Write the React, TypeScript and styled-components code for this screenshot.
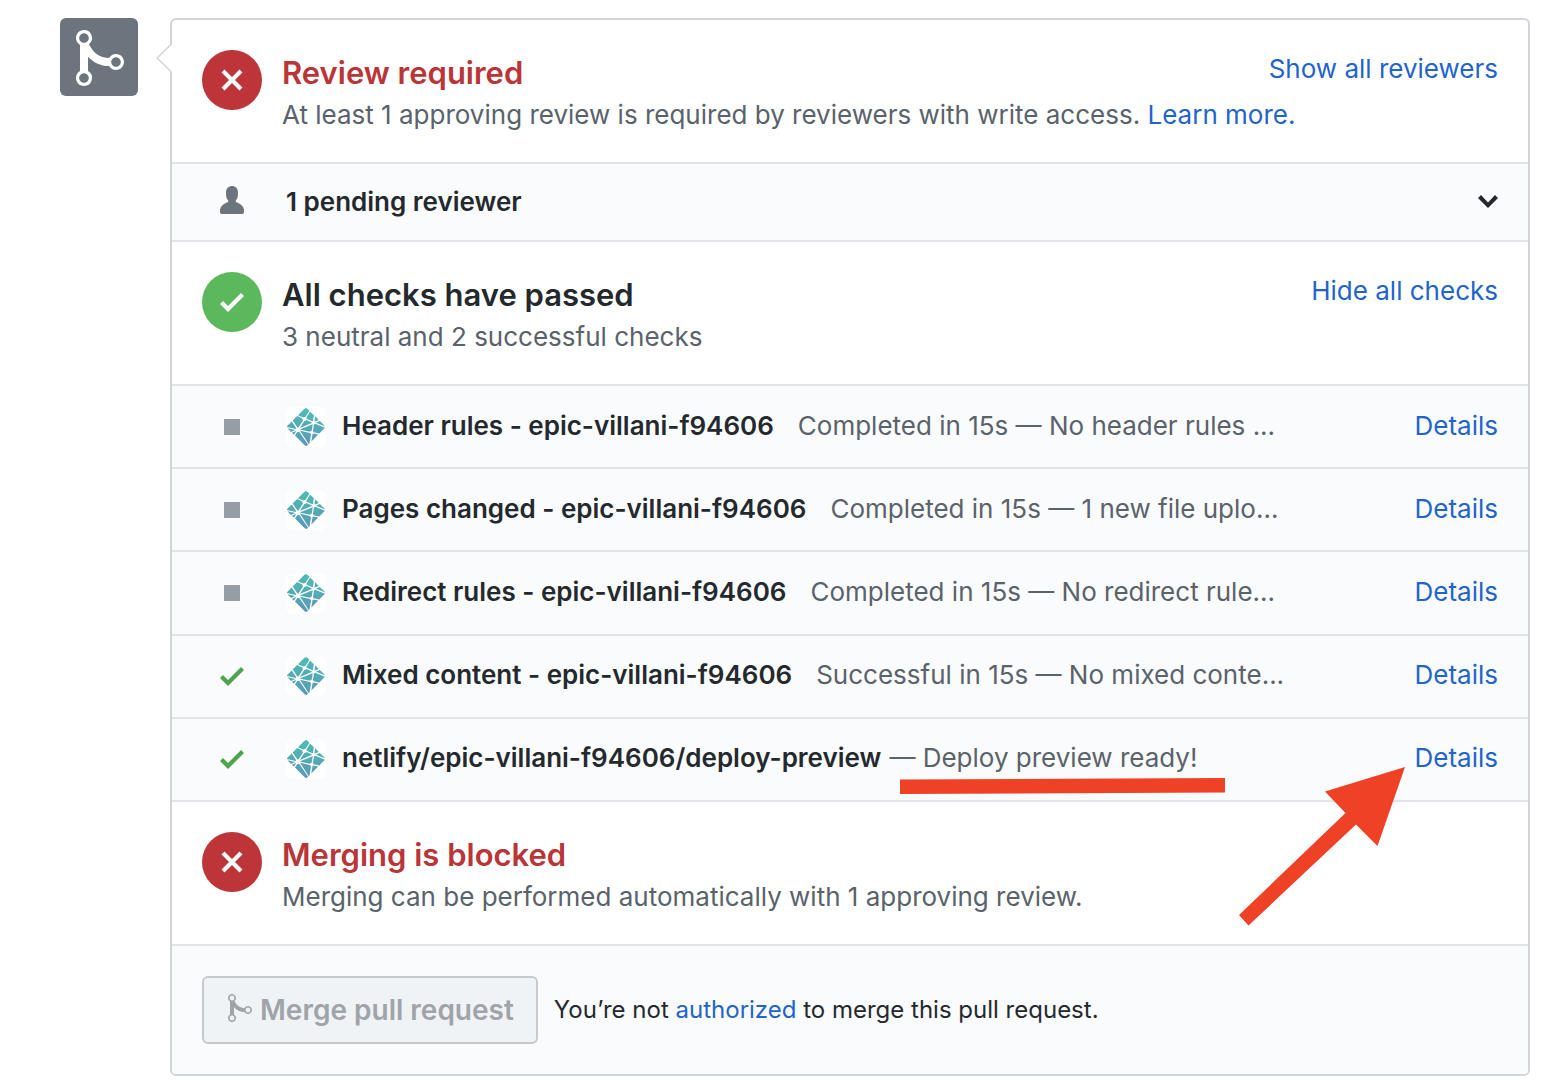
import React from 'react';
import styled, { createGlobalStyle, css } from 'styled-components';
import { BiLogoNetlify } from 'react-icons/bi';

const color = {
  text: '#24292e',
  muted: '#5a626b',
  link: '#2264cc',
  red: '#b93538',
  redFill: '#bd3538',
  greenFill: '#5bb85c',
  green: '#4ea44e',
  line: '#e1e4e8',
  frame: '#d1d5da',
  subtle: '#fafbfd',
  mark: '#ee4126',
};

const GlobalStyle = createGlobalStyle`
  *, *::before, *::after { box-sizing: border-box; }
  body {
    margin: 0;
    background: #fff;
    color: ${color.text};
    font-family: Inter, "Liberation Sans", sans-serif;
    font-size: 26px;
    line-height: 38px;
  }
  h2, p, ul { margin: 0; padding: 0; font-size: inherit; }
`;

const Page = styled.main`
  display: flex;
  align-items: flex-start;
  gap: 32px;
  padding: 18px 22px 10px 60px;
`;

const Badge = styled.div`
  flex: none;
  display: flex;
  align-items: center;
  justify-content: center;
  width: 78px;
  height: 78px;
  padding: 2px 0 0 2px;
  border-radius: 6px;
  background: #6c757e;
  color: #fff;
`;

const Box = styled.section`
  position: relative;
  flex: 1;
  min-width: 0;
  border: 2px solid ${color.frame};
  border-radius: 6px;
`;

const Caret = styled.svg`
  position: absolute;
  left: -16px;
  top: 22px;
  width: 16px;
  height: 32px;
`;

const Section = styled.div`
  display: flex;
  align-items: flex-start;
  gap: 20px;
  padding: 30px 30px 28px;
  border-bottom: 2px solid ${color.line};
`;

const Circle = styled.div<{ $fill: string }>`
  flex: none;
  display: flex;
  align-items: center;
  justify-content: center;
  width: 60px;
  height: 60px;
  border-radius: 50%;
  background: ${p => p.$fill};
  color: #fff;
`;

const SectionBody = styled.div`
  flex: 1;
  min-width: 0;
`;

const SectionHead = styled.div`
  display: flex;
  align-items: flex-start;
  justify-content: space-between;
`;

const Title = styled.h2<{ $danger?: boolean }>`
  && { font-size: 31px; }
  line-height: 46px;
  font-weight: 600;
  color: ${p => (p.$danger ? color.red : color.text)};
`;

const Summary = styled.p`
  color: ${color.muted};
`;

const Link = styled.a`
  color: ${color.link};
  text-decoration: none;
  &:hover { text-decoration: underline; }
`;

const plainButton = css`
  font: inherit;
  border: 0;
  background: none;
  padding: 0;
  cursor: pointer;
`;

const ToggleButton = styled.button`
  ${plainButton}
  flex: none;
  color: ${color.link};
`;

const PendingButton = styled.button`
  ${plainButton}
  display: flex;
  align-items: center;
  gap: 24px;
  width: 100%;
  padding: 19px 30px;
  border-bottom: 2px solid ${color.line};
  background: ${color.subtle};
  color: ${color.text};
  font-weight: 600;
  text-align: left;
`;

const PendingLabel = styled.span`
  flex: 1;
`;

const StatusCell = styled.span<{ $tone: string; $raised?: boolean }>`
  flex: none;
  display: flex;
  justify-content: center;
  width: 60px;
  padding-bottom: ${p => (p.$raised ? 4 : 0)}px;
  color: ${p => p.$tone};
`;

const CheckList = styled.ul`
  display: grid;
  grid-auto-rows: 1fr;
  min-height: 416px;
  list-style: none;
  background: ${color.subtle};
`;

const CheckRow = styled.li`
  position: relative;
  display: flex;
  align-items: center;
  gap: 16px;
  padding: 0 30px;
  border-bottom: 2px solid ${color.line};
`;

const CheckLead = styled.span`
  display: flex;
  align-items: center;
  gap: 24px;
`;

const AppLogo = styled.span`
  flex: none;
  display: flex;
  width: 40px;
  height: 40px;
  border-radius: 6px;
  background: #fff;
  svg { width: 40px; height: 40px; fill: url(#netlify-fade); }
`;

const CheckText = styled.div`
  flex: 1;
  display: flex;
  min-width: 0;
  padding-bottom: 2px;
  white-space: nowrap;
`;

const CheckName = styled.strong`
  font-weight: 600;
`;

const CheckNote = styled.span<{ $near?: boolean }>`
  position: relative;
  padding-left: ${p => (p.$near ? 8 : 24)}px;
  color: ${color.muted};
`;

const DetailsLink = styled(Link)`
  padding-bottom: 2px;
`;

const Underline = styled.svg`
  position: absolute;
  left: 19px;
  top: 39px;
  width: 325px;
  height: 16px;
`;

const Arrow = styled.svg`
  position: absolute;
  right: 122px;
  top: 48px;
  width: 167px;
  height: 160px;
  z-index: 1;
  pointer-events: none;
`;

const Footer = styled.div`
  display: flex;
  align-items: center;
  gap: 16px;
  padding: 30px;
  border-radius: 0 0 4px 4px;
  background: ${color.subtle};
  font-size: 24px;
`;

const MergeButton = styled.button`
  display: flex;
  align-items: center;
  gap: 8px;
  height: 68px;
  padding: 0 22px 0 24px;
  border: 2px solid #c6cacd;
  border-radius: 6px;
  background: #eff3f6;
  color: #a0a4a8;
  font: inherit;
  font-size: 28px;
  font-weight: 600;
  white-space: nowrap;
  svg { margin-bottom: 4px; }
`;

const icons = {
  merge: { w: 12, d: 'M10 7c-.73 0-1.38.41-1.73 1.02V8C7.22 7.98 6 7.64 5.14 6.98c-.75-.58-1.5-1.61-1.89-2.44A1.993 1.993 0 0 0 2 .99C.89.99 0 1.89 0 3a2 2 0 0 0 1 1.72v6.56c-.59.35-1 .99-1 1.72 0 1.11.89 2 2 2a1.993 1.993 0 0 0 1-3.72V7.67c.67.7 1.44 1.27 2.3 1.69.86.42 2.03.63 2.97.64v-.02c.36.61 1 1.02 1.73 1.02 1.11 0 2-.89 2-2 0-1.11-.89-2-2-2zm-6.8 6c0 .66-.55 1.2-1.2 1.2-.65 0-1.2-.55-1.2-1.2 0-.65.55-1.2 1.2-1.2.65 0 1.2.55 1.2 1.2zM2 4.2C1.34 4.2.8 3.65.8 3c0-.65.55-1.2 1.2-1.2.65 0 1.2.55 1.2 1.2 0 .65-.55 1.2-1.2 1.2zm8 6c-.66 0-1.2-.55-1.2-1.2 0-.65.55-1.2 1.2-1.2.65 0 1.2.55 1.2 1.2 0 .65-.55 1.2-1.2 1.2z' },
  x: { w: 12, d: 'M7.48 8l3.75 3.75-1.48 1.48L6 9.48l-3.75 3.75-1.48-1.48L4.52 8 .77 4.25l1.48-1.48L6 6.52l3.75-3.75 1.48 1.48L7.48 8z' },
  check: { w: 12, d: 'M12 5l-8 8-4-4 1.5-1.5L4 10l6.5-6.5L12 5z' },
  person: { w: 12, d: 'M12 14.002a.998.998 0 0 1-.998.998H1.001A1 1 0 0 1 0 13.999V13c0-2.633 4-4 4-4s.229-.409 0-1c-.841-.62-.944-1.59-1-4 .173-2.413 1.867-3 3-3s2.827.586 3 3c-.056 2.41-.159 3.38-1 4-.229.59 0 1 0 1s4 1.367 4 4v1.002z' },
  chevron: { w: 10, d: 'M5 11L0 6l1.5-1.5L5 8.25 8.5 4.5 10 6l-5 5z' },
  square: { w: 8, d: 'M8 12H0V4h8v8z' },
};

function Octicon({ name, scale = 2 }: { name: keyof typeof icons; scale?: number }) {
  const { w, d } = icons[name];
  return (
    <svg width={w * scale} height={16 * scale} viewBox={`0 0 ${w} 16`} fill="currentColor" aria-hidden="true">
      <path fillRule="evenodd" d={d} />
    </svg>
  );
}

const FadeDefs = styled.svg`
  position: absolute;
  width: 0;
  height: 0;
`;

const checks = [
  { name: 'Header rules - epic-villani-f94606', note: 'Completed in 15s — No header rules ...', passed: false },
  { name: 'Pages changed - epic-villani-f94606', note: 'Completed in 15s — 1 new file uplo...', passed: false },
  { name: 'Redirect rules - epic-villani-f94606', note: 'Completed in 15s — No redirect rule...', passed: false },
  { name: 'Mixed content - epic-villani-f94606', note: 'Successful in 15s — No mixed conte...', passed: true },
  { name: 'netlify/epic-villani-f94606/deploy-preview', note: '— Deploy preview ready!', passed: true, marked: true },
];

export default function App() {
  return (
    <>
      <GlobalStyle />
      <FadeDefs aria-hidden="true">
        <linearGradient id="netlify-fade" x1="0" y1="0" x2="0" y2="1">
          <stop offset="0" stopColor="#4fbdb2" />
          <stop offset="1" stopColor="#5a98ba" />
        </linearGradient>
      </FadeDefs>
      <Page>
        <Badge><Octicon name="merge" scale={4} /></Badge>
        <Box>
          <Caret viewBox="0 0 16 32" aria-hidden="true">
            <path d="M16 1.5L1 16l15 14.5" fill="#fff" stroke={color.frame} strokeWidth="1.5" />
          </Caret>

          <Section>
            <Circle $fill={color.redFill}><Octicon name="x" /></Circle>
            <SectionBody>
              <SectionHead>
                <Title $danger>Review required</Title>
                <ToggleButton type="button">Show all reviewers</ToggleButton>
              </SectionHead>
              <Summary>
                At least 1 approving review is required by reviewers with write access. <Link href="#learn">Learn more.</Link>
              </Summary>
            </SectionBody>
          </Section>

          <PendingButton type="button">
            <StatusCell $tone="#6c757e" $raised><Octicon name="person" /></StatusCell>
            <PendingLabel>1 pending reviewer</PendingLabel>
            <Octicon name="chevron" />
          </PendingButton>

          <Section>
            <Circle $fill={color.greenFill}><Octicon name="check" /></Circle>
            <SectionBody>
              <SectionHead>
                <Title>All checks have passed</Title>
                <ToggleButton type="button">Hide all checks</ToggleButton>
              </SectionHead>
              <Summary>3 neutral and 2 successful checks</Summary>
            </SectionBody>
          </Section>

          <CheckList>
            {checks.map(c => (
              <CheckRow key={c.name}>
                <CheckLead>
                  <StatusCell $tone={c.passed ? color.green : '#959da5'}>
                    <Octicon name={c.passed ? 'check' : 'square'} />
                  </StatusCell>
                  <AppLogo><BiLogoNetlify viewBox="1.5 1.5 21 21" /></AppLogo>
                </CheckLead>
                <CheckText>
                  <CheckName>{c.name}</CheckName>
                  <CheckNote $near={c.marked}>
                    {c.note}
                    {c.marked && (
                      <Underline viewBox="0 0 325 16" aria-hidden="true">
                        <path d="M0 1.5L325 0v14.5L0 16z" fill={color.mark} />
                      </Underline>
                    )}
                  </CheckNote>
                </CheckText>
                <DetailsLink href="#details">Details</DetailsLink>
                {c.marked && (
                  <Arrow viewBox="0 0 167 160" aria-hidden="true">
                    <path d="M166 0L86 24.5l20.5 21.5L0 148l9.5 10.5L117 57.5l21.5 21.5z" fill={color.mark} />
                  </Arrow>
                )}
              </CheckRow>
            ))}
          </CheckList>

          <Section>
            <Circle $fill={color.redFill}><Octicon name="x" /></Circle>
            <SectionBody>
              <Title $danger>Merging is blocked</Title>
              <Summary>Merging can be performed automatically with 1 approving review.</Summary>
            </SectionBody>
          </Section>

          <Footer>
            <MergeButton type="button" disabled>
              <Octicon name="merge" />
              Merge pull request
            </MergeButton>
            <p>You’re not <Link href="#authorized">authorized</Link> to merge this pull request.</p>
          </Footer>
        </Box>
      </Page>
    </>
  );
}
